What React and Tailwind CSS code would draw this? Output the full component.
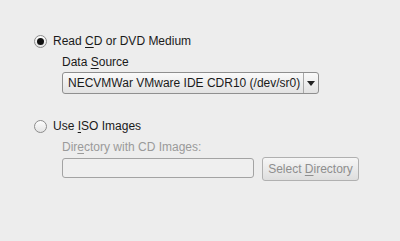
import React from "react";

const Radio = ({ checked }) => (
  <span className="relative flex h-[13px] w-[13px] shrink-0 items-center justify-center rounded-full border border-[#8c8c8c] bg-gradient-to-b from-[#fdfdfd] to-[#e4e4e4]">
    {checked && <span className="h-[7px] w-[7px] rounded-full bg-[#111]" />}
  </span>
);

const U = ({ children }) => <span className="underline underline-offset-[2px]">{children}</span>;

export default function App() {
  return (
    <div
      className="h-[241px] w-[400px] overflow-hidden bg-[#ededed] text-[12px] leading-[14px] text-[#1a1a1a]"
      style={{ fontFamily: "'Liberation Sans', Arial, sans-serif" }}
    >
      <div className="flex flex-col pl-[34px] pt-[34px]">
        {/* CD / DVD */}
        <label className="flex items-center gap-[6px]">
          <Radio checked />
          <span>
            Read <U>C</U>D or DVD Medium
          </span>
        </label>
        <div className="ml-[28px] mt-[7px] flex flex-col">
          <span>
            Data <U>S</U>ource
          </span>
          <div className="mt-[3px] flex h-[22px] w-[257px] items-stretch rounded-[3px] border border-[#8f8f8f] bg-gradient-to-b from-[#fafafa] to-[#e2e2e2]">
            <span className="flex flex-1 items-center pl-[5px] whitespace-nowrap">
              NECVMWar VMware IDE CDR10 (/dev/sr0)
            </span>
            <span className="flex w-[15px] items-center justify-center border-l border-[#a8a8a8]">
              <svg width="8" height="5" viewBox="0 0 8 5">
                <path d="M0 0h8L4 5z" fill="#222" />
              </svg>
            </span>
          </div>
        </div>

        {/* ISO */}
        <label className="mt-[25px] flex items-center gap-[6px]">
          <Radio />
          <span>
            Use <U>I</U>SO Images
          </span>
        </label>
        <div className="ml-[28px] mt-[7px] flex flex-col">
          <span className="text-[#9a9a9a]">
            Dir<U>e</U>ctory with CD Images:
          </span>
          <div className="mt-[3px] flex items-start gap-[8px]">
            <div className="mt-[1px] h-[20px] w-[192px] rounded-[3px] border border-[#a3a3a3] bg-[#efefef]" />
            <button className="h-[24px] w-[97px] rounded-[3px] border border-[#b0b0b0] bg-gradient-to-b from-[#f6f6f6] to-[#dedede] text-[12px] text-[#8e8e8e]">
              Select <U>D</U>irectory
            </button>
          </div>
        </div>
      </div>
    </div>
  );
}
